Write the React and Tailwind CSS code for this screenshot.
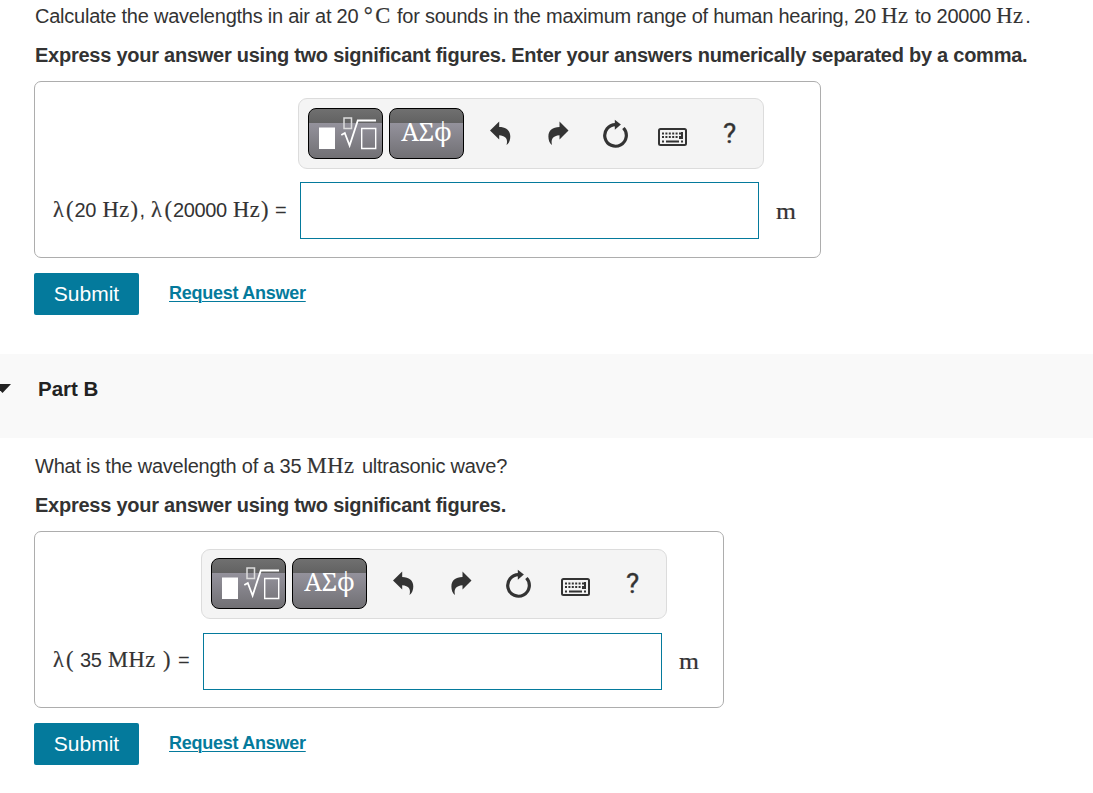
import clsx from 'clsx';

function Unit({ children, className }) {
  return (
    <span className={clsx("inline-block whitespace-nowrap font-['Liberation_Serif',serif] text-[22.5px] leading-none tracking-[0.5px] [-webkit-text-stroke:0.2px_#333]", className)}>
      {children}
    </span>
  );
}

function Toolbar({ className }) {
  const keyClass =
    'h-[51px] w-[75px] shrink-0 rounded-lg border border-black bg-[linear-gradient(#707070_0,#626262_14px,#94929c_14px,#717074_100%)] text-white';
  return (
    <div className={clsx('flex w-[466px] items-start rounded-[9px] border border-[#dcdcdc] bg-[#f4f4f4] pl-[9px] text-[#333]', className)}>
      <button className={keyClass} aria-label="Templates">
        <svg width="73" height="49" viewBox="0 0 73 49" fill="none" stroke="#fff">
          <path d="M10 18.5h16V40H10z" fill="#fff" stroke="none" />
          <path d="M35 9h7.5v10.5H35z" stroke="#ddd" strokeWidth="1.5" />
          <path d="M32.3 26l3.5-2 4.8 12.5L48.8 11.5H67" strokeWidth="1.8" />
          <path d="M52.7 19.5h14v20h-14z" strokeWidth="1.4" />
        </svg>
      </button>
      <button className={clsx(keyClass, "ml-1.5 pb-[4px] font-['Noto_Serif','DejaVu_Serif',serif] text-[25px] leading-none")}>
        <span className="-mx-2 inline-block">ΑΣϕ</span>
      </button>
      <svg className="ml-[26px] mt-[13px]" width="22" height="24" viewBox="0 0 22 24" fill="currentColor">
        <path d="M0 9.5L9.2 0.5V6C16 6 20.3 9.5 20.3 15.5C20.3 19 19 22.5 16.5 24C18.2 18 15.8 14.8 9.2 14.2V18.5Z" />
      </svg>
      <svg className="ml-[36px] mt-[13px]" width="22" height="24" viewBox="0 0 22 24" fill="currentColor">
        <path d="M20.5 9.5L11.5 0.5V6C4.5 6 0.4 9.5 0.4 15.5C0.4 19 1.5 22.5 4 24C2.5 18 5 14.8 11.5 14.2V18.5Z" />
      </svg>
      <svg className="ml-[33px] mt-[11px]" width="26" height="29" viewBox="0 0 26 29" fill="none">
        <path d="M12.6 5.6A10.8 10.8 0 1 0 20.4 9" stroke="currentColor" strokeWidth="3.2" />
        <path d="M11.8 0.8L17.9 5.6L11.8 10.8Z" fill="currentColor" />
      </svg>
      <svg className="ml-[29px] mt-[20px]" width="30" height="18" viewBox="0 0 30 18" fill="none" stroke="currentColor">
        <rect x="1" y="1" width="27" height="16" rx="1.5" strokeWidth="2" />
        <path d="M4 5.5h19M4 9h19" strokeWidth="2" strokeDasharray="2 1.4" />
        <path d="M24 4v6h-3M4 13.5h2M8 13.5h13M23 13.5h2" strokeWidth="2" />
      </svg>
      <span className="ml-[35px] mt-[10px] font-['Roboto',sans-serif] text-[28px] leading-[31px] [-webkit-text-stroke:0.3px_#333]">?</span>
    </div>
  );
}

function Actions() {
  return (
    <div className="mt-[15px] ml-[34px] flex h-[42px] items-center">
      <button className="h-[42px] w-[105px] rounded-[2px] bg-[#047a9c] text-[21px] text-white">Submit</button>
      <a href="#" className="ml-[30px] -mt-[3px] text-[18px] font-bold tracking-[-0.26px] text-[#047a9c] underline decoration-1 underline-offset-2">
        Request Answer
      </a>
    </div>
  );
}

function AnswerBox({ label, className, labelClass, toolbarClass, unitClass }) {
  return (
    <div className={clsx('ml-[34px] h-[177px] rounded-[7px] border border-[#adadad]', className)}>
      <Toolbar className={toolbarClass} />
      <div className="flex items-start">
        <div className={clsx('flex shrink-0 items-baseline whitespace-nowrap pl-[18px] text-[20px] leading-6 tracking-[-0.4px]', labelClass)}>{label}</div>
        <input className="h-[57px] w-[459px] shrink-0 border border-[#047a9c] bg-white outline-none" />
        <Unit className={clsx('ml-[17px]', unitClass)}><span className="inline-block origin-left scale-x-[1.14]">m</span></Unit>
      </div>
    </div>
  );
}

export default function App() {
  return (
    <div className="h-[793px] overflow-hidden bg-white font-['Liberation_Sans',Arial,sans-serif] text-[20px] leading-6 text-[#333]">
      <p className="ml-[35px] mt-1 h-6 whitespace-nowrap tracking-[-0.24px]">
        Calculate the wavelengths in air at 20 <Unit className="w-[28px]"><span>°</span><span className="ml-[2px]">C</span></Unit> for sounds in the maximum range of human hearing, 20{' '}
        <Unit className="w-[28.5px]">Hz</Unit> to 20000 <Unit className="w-[29px]">Hz</Unit>.
      </p>
      <p className="ml-[35px] mt-[15px] h-6 whitespace-nowrap font-bold tracking-[-0.25px]">
        Express your answer using two significant figures. Enter your answers numerically separated by a comma.
      </p>
      <AnswerBox
        className="mt-[14px] w-[787px]"
        toolbarClass="ml-[263px] mt-[16px] mb-[13px] h-[71px] pt-[9px]"
        labelClass="w-[265px] pt-[16px]"
        unitClass="mt-[19px]"
        label={<>
          <Unit className="w-[13px]">λ</Unit><Unit className="w-[8.5px]">(</Unit>
          <span className="w-[28px]">20</span>
          <Unit className="w-[28px]">Hz</Unit><Unit className="w-[9px]">)</Unit>
          <span className="w-[11.5px]">,</span>
          <Unit className="w-[13.5px]">λ</Unit><Unit className="w-[8.5px]">(</Unit>
          <span className="w-[60px]">20000</span>
          <Unit className="w-[28px]">Hz</Unit><Unit className="w-[14px]">)</Unit>
          <span>=</span>
        </>}
      />
      <Actions />
      <div className="mt-[39px] flex h-[84px] items-start bg-[#f9f9f9] text-[#222]">
        <svg className="-ml-[6px] mt-[30px]" width="17" height="9" viewBox="0 0 17 9" fill="currentColor"><path d="M0 0h17L8.5 9z" /></svg>
        <h2 className="ml-[27px] mt-[23px] text-[20.5px] font-bold leading-6">Part B</h2>
      </div>
      <p className="ml-[35px] mt-4 h-6 whitespace-nowrap tracking-[-0.24px]">
        What is the wavelength of a 35 <Unit className="w-[50px]">MHz</Unit> ultrasonic wave?
      </p>
      <p className="ml-[35px] mt-[15px] h-6 whitespace-nowrap font-bold tracking-[-0.25px]">Express your answer using two significant figures.</p>
      <AnswerBox
        className="mt-[14px] w-[690px]"
        toolbarClass="ml-[166px] mt-[17px] mb-[14px] h-[70px] pt-[8px]"
        labelClass="w-[168px] pt-[15px]"
        unitClass="mt-[18px]"
        label={<>
          <Unit className="w-[13px]">λ</Unit><Unit className="w-[14px]">(</Unit>
          <span className="w-[28px]">35</span>
          <Unit className="w-[55px]">MHz</Unit><Unit className="w-[15px]">)</Unit>
          <span>=</span>
        </>}
      />
      <Actions />
    </div>
  );
}
